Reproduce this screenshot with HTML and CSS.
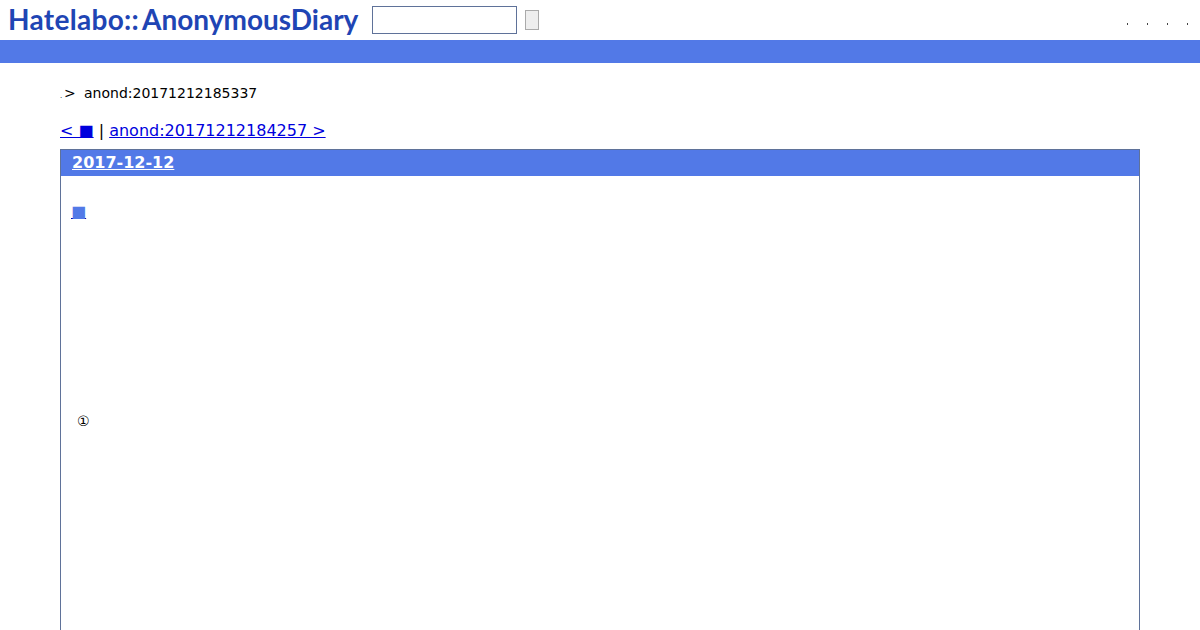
FILE: index.html
```html
<!DOCTYPE html>
<html lang="ja">
<head>
    <meta charset="UTF-8">
    <title>anond:20171212185337</title>
    <link rel="stylesheet" href="styles.css">
</head>
<body>
<div id="header">
    <h1 class="logo"><a href="#">Hatelabo::<span class="logo-name">AnonymousDiary</span></a></h1>
    <form class="search">
        <input type="text" class="search-text">
        <button type="button" class="search-btn"></button>
    </form>
    <ul class="header-menu">
        <li></li>
        <li></li>
        <li></li>
        <li></li>
    </ul>
</div>
<div id="bar"></div>
<div id="main">
    <p class="breadcrumb"><span class="dot">.</span><span class="gt">&gt;</span><span>anond:20171212185337</span></p>
    <p class="prevnext"><a href="#">&lt; ■</a> | <a href="#">anond:20171212184257 &gt;</a></p>
    <div class="day">
        <h2><a href="#">2017-12-12</a></h2>
        <div class="body">
            <h3><a href="#">■</a></h3>
            <p class="note">①</p>
        </div>
    </div>
</div>
</body>
</html>
```

FILE: styles.css
```css
/* Genel */
html, body {
    height: 630px;
    overflow: hidden;
}

body {
    margin: 0;
    font-family: "DejaVu Sans", sans-serif;
    background: #fff;
    color: #000;
}

a {
    color: #00d;
}

/* Header */
#header {
    display: flex;
    align-items: center;
    height: 40px;
    padding-left: 8px;
}

.logo {
    margin: 0 0 2px;
    width: 364px;
    font-family: "Lato", sans-serif;
    font-size: 28px;
    font-weight: 700;
    letter-spacing: 0.3px;
    white-space: nowrap;
}

.logo a {
    color: #1f45b4;
    text-decoration: none;
}

.logo-name {
    margin-left: 3px;
    letter-spacing: 0;
}

.search {
    display: flex;
    align-items: center;
    gap: 8px;
}

.search-text {
    box-sizing: border-box;
    width: 145px;
    height: 28px;
    margin: 0;
    padding: 0;
    border: 1px solid #5f7299;
    background: #fff;
}

.search-btn {
    box-sizing: border-box;
    width: 14px;
    height: 20px;
    margin: 0;
    padding: 0;
    border: 1px solid #aaa;
    background: #eee;
}

.header-menu {
    display: flex;
    gap: 19px;
    margin: 7px 12px 0 auto;
    padding: 0;
    list-style: none;
}

.header-menu li {
    width: 1px;
    height: 2px;
    background: #444;
}

#bar {
    height: 23px;
    background: #5279e7;
}

/* Icerik */
#main {
    padding: 0 60px;
}

.breadcrumb {
    display: flex;
    align-items: baseline;
    margin: 21px 0 0;
    height: 18px;
    font-size: 14px;
    line-height: 18px;
}

.dot {
    font-size: 7px;
    width: 4px;
}

.gt {
    width: 20px;
}

.prevnext {
    margin: 19px 0 0;
    height: 20px;
    font-size: 16px;
    line-height: 20px;
}

.day {
    margin-top: 8px;
    height: 600px;
    border: 1px solid #5f7299;
}

.day h2 {
    margin: 0;
    height: 26px;
    padding-left: 11px;
    background: #5279e7;
    font-size: 16px;
    line-height: 26px;
    font-weight: bold;
}

.day h2 a {
    color: #fff;
}

.body {
    padding: 0 10px;
}

.body h3 {
    margin: 24px 0 0;
    font-size: 16px;
    font-weight: normal;
    line-height: 24px;
}

.body h3 a {
    color: #5279e7;
    text-decoration-color: #00a;
}

.note {
    margin: 188px 0 0 6px;
    font-size: 14px;
    line-height: 18px;
}
```
